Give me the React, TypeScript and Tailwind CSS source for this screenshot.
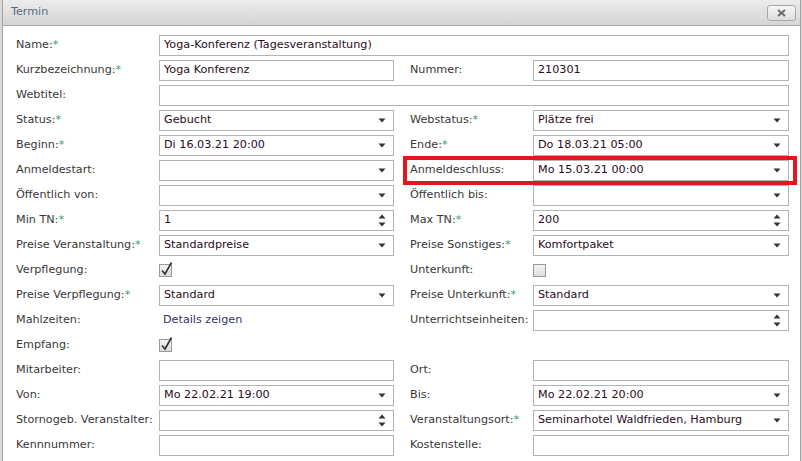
import React from 'react';

type Field =
  | { kind: 'text'; value?: string }
  | { kind: 'select'; value?: string }
  | { kind: 'spin'; value?: string }
  | { kind: 'check'; checked: boolean }
  | { kind: 'link'; value: string }
  | { kind: 'none' };

type Cell = { label: string; req?: boolean; field: Field };

const rows: [Cell, Cell | null][] = [
  [{ label: 'Kurzbezeichnung:', req: true, field: { kind: 'text', value: 'Yoga Konferenz' } }, { label: 'Nummer:', field: { kind: 'text', value: '210301' } }],
];

const rest: [Cell, Cell | null][] = [
  [{ label: 'Status:', req: true, field: { kind: 'select', value: 'Gebucht' } }, { label: 'Webstatus:', req: true, field: { kind: 'select', value: 'Plätze frei' } }],
  [{ label: 'Beginn:', req: true, field: { kind: 'select', value: 'Di 16.03.21 20:00' } }, { label: 'Ende:', req: true, field: { kind: 'select', value: 'Do 18.03.21 05:00' } }],
  [{ label: 'Anmeldestart:', field: { kind: 'select' } }, { label: 'Anmeldeschluss:', field: { kind: 'select', value: 'Mo 15.03.21 00:00' } }],
  [{ label: 'Öffentlich von:', field: { kind: 'select' } }, { label: 'Öffentlich bis:', field: { kind: 'select' } }],
  [{ label: 'Min TN:', req: true, field: { kind: 'spin', value: '1' } }, { label: 'Max TN:', req: true, field: { kind: 'spin', value: '200' } }],
  [{ label: 'Preise Veranstaltung:', req: true, field: { kind: 'select', value: 'Standardpreise' } }, { label: 'Preise Sonstiges:', req: true, field: { kind: 'select', value: 'Komfortpaket' } }],
  [{ label: 'Verpflegung:', field: { kind: 'check', checked: true } }, { label: 'Unterkunft:', field: { kind: 'check', checked: false } }],
  [{ label: 'Preise Verpflegung:', req: true, field: { kind: 'select', value: 'Standard' } }, { label: 'Preise Unterkunft:', req: true, field: { kind: 'select', value: 'Standard' } }],
  [{ label: 'Mahlzeiten:', field: { kind: 'link', value: 'Details zeigen' } }, { label: 'Unterrichtseinheiten:', field: { kind: 'spin' } }],
  [{ label: 'Empfang:', field: { kind: 'check', checked: true } }, null],
  [{ label: 'Mitarbeiter:', field: { kind: 'text' } }, { label: 'Ort:', field: { kind: 'text' } }],
  [{ label: 'Von:', field: { kind: 'select', value: 'Mo 22.02.21 19:00' } }, { label: 'Bis:', field: { kind: 'select', value: 'Mo 22.02.21 20:00' } }],
  [{ label: 'Stornogeb. Veranstalter:', field: { kind: 'spin' } }, { label: 'Veranstaltungsort:', req: true, field: { kind: 'select', value: 'Seminarhotel Waldfrieden, Hamburg' } }],
  [{ label: 'Kennnummer:', field: { kind: 'text' } }, { label: 'Kostenstelle:', field: { kind: 'text' } }],
];

function Label({ label, req, width }: { label: string; req?: boolean; width: string }) {
  return (
    <div className={`${width} shrink-0 text-[#383838] whitespace-nowrap`}>
      {label}
      {req && <span className="text-[#3c9a6a]">*</span>}
    </div>
  );
}

function Caret() {
  return (
    <svg width="8" height="5" viewBox="0 0 8 5" className="shrink-0">
      <path d="M0.5 0.5h7L4 4.5z" fill="#333" />
    </svg>
  );
}

function Spinner() {
  return (
    <svg width="8" height="13" viewBox="0 0 8 13" className="shrink-0">
      <path d="M4 0.5L7.5 4.5h-7z" fill="#333" />
      <path d="M0.5 8.5h7L4 12.5z" fill="#333" />
    </svg>
  );
}

function Check({ checked }: { checked: boolean }) {
  return (
    <div className="relative w-[13px] h-[13px] border border-[#9a9a9a] bg-gradient-to-b from-[#f4f4f4] to-[#dcdcdc]">
      {checked && (
        <svg width="16" height="16" viewBox="0 0 16 16" className="absolute left-[-1px] top-[-4px]">
          <path d="M3 9.5l3 3.5L12.5 1.5" stroke="#333" strokeWidth="1.6" fill="none" />
        </svg>
      )}
    </div>
  );
}

function Control({ field, width }: { field: Field; width: string }) {
  if (field.kind === 'none') return <div className={width} />;
  if (field.kind === 'check')
    return (
      <div className={`${width} flex items-center`}>
        <Check checked={field.checked} />
      </div>
    );
  if (field.kind === 'link')
    return <div className={`${width} pl-[4px] text-[#34346e]`}>{field.value}</div>;
  return (
    <div className={`${width} h-[21px] flex items-center border border-[#b3b3b3] bg-white pl-[4px] pr-[7px] text-[#2a0c22]`}>
      <span className="flex-1 whitespace-nowrap overflow-hidden">{field.value ?? ''}</span>
      {field.kind === 'select' && <Caret />}
      {field.kind === 'spin' && <Spinner />}
    </div>
  );
}

function Row({ pair, highlight }: { pair: [Cell, Cell | null]; highlight?: boolean }) {
  const [l, r] = pair;
  return (
    <div className="h-[25px] flex items-center">
      <Label label={l.label} req={l.req} width="w-[143px]" />
      <Control field={l.field} width="w-[235px]" />
      <div className="w-[16px] shrink-0" />
      {r && (
        <div className="relative flex items-center">
          {highlight && (
            <div className="absolute left-[-7px] right-[-8px] top-[-4px] bottom-[-4px] border-[4px] border-[#e4161d] pointer-events-none" />
          )}
          <Label label={r.label} req={r.req} width="w-[123px]" />
          <Control field={r.field} width="w-[256px]" />
        </div>
      )}
    </div>
  );
}

export default function App() {
  return (
    <div
      className="w-[802px] h-[461px] overflow-hidden bg-[#d9d9d9] pl-[2px] text-[11.2px]"
      style={{ fontFamily: '"DejaVu Sans", Verdana, sans-serif' }}
    >
      <div className="w-[799px] h-full bg-white border-l border-r border-[#a3a3a3] flex flex-col">
        <div className="h-[26px] shrink-0 flex items-center justify-between pl-[8px] pr-[4px] bg-gradient-to-b from-[#ececec] to-[#d5d5d5] border-b border-[#a9a9a9]">
          <span className="text-[#5a6b80]">Termin</span>
          <div className="w-[29px] h-[16px] rounded-[3px] border border-[#a8a8a8] bg-gradient-to-b from-[#f6f6f6] to-[#dddddd] flex items-center justify-center">
            <svg width="9" height="8" viewBox="0 0 9 8">
              <path d="M1 1l7 6M8 1L1 7" stroke="#6b6b6b" strokeWidth="2" />
            </svg>
          </div>
        </div>
        <div className="pl-[13px] pt-[7px]">
          <div className="h-[25px] flex items-center">
            <Label label="Name:" req width="w-[143px]" />
            <Control field={{ kind: 'text', value: 'Yoga-Konferenz (Tagesveranstaltung)' }} width="w-[630px]" />
          </div>
          {rows.map((p, i) => (
            <Row key={'a' + i} pair={p} />
          ))}
          <div className="h-[25px] flex items-center">
            <Label label="Webtitel:" width="w-[143px]" />
            <Control field={{ kind: 'text' }} width="w-[630px]" />
          </div>
          {rest.map((p, i) => (
            <Row key={'b' + i} pair={p} highlight={p[1]?.label === 'Anmeldeschluss:'} />
          ))}
        </div>
      </div>
    </div>
  );
}
